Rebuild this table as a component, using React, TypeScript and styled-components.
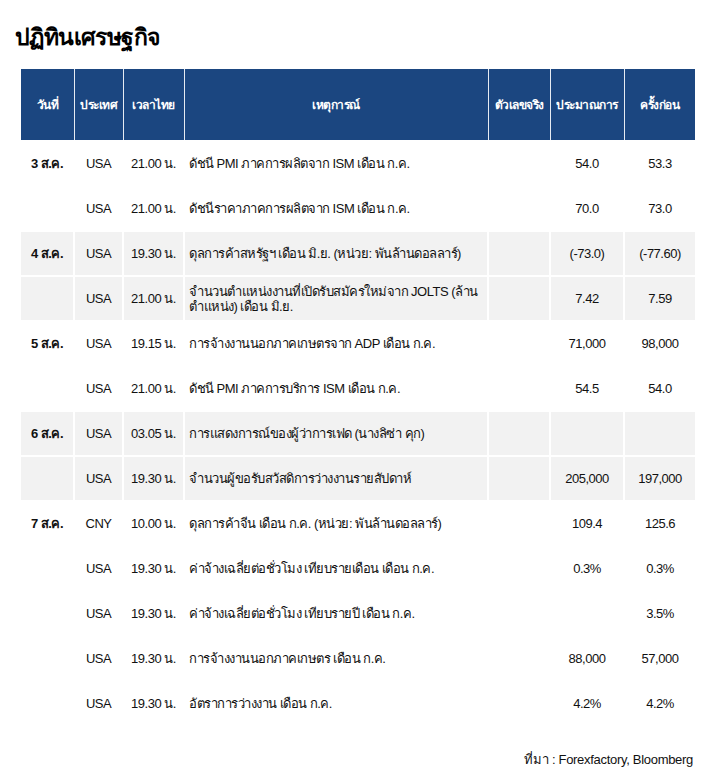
import { FC } from "react"
import styled, { createGlobalStyle } from "styled-components"

const GlobalStyle = createGlobalStyle`
  * {
    box-sizing: border-box;
  }
  body {
    margin: 0;
    background: #ffffff;
    font-family: "Liberation Sans", "Noto Sans", "DejaVu Sans", sans-serif;
    color: #111111;
  }
`

const Page = styled.div`
  width: 713px;
  padding: 21px 20px 0 14px;
`

const Title = styled.h1`
  margin: 0 0 16px 1px;
  font-size: 23px;
  font-weight: 700;
  line-height: 32px;
  letter-spacing: -0.6px;
  color: #000000;
`

const Table = styled.table`
  width: 674px;
  margin-left: 7px;
  border-collapse: collapse;
  font-size: 13px;
  letter-spacing: -0.5px;
`

const HeadCell = styled.th<{ $w: number }>`
  width: ${(p) => p.$w}px;
  height: 72px;
  background: #1b4680;
  color: #ffffff;
  font-size: 12px;
  font-weight: 700;
  text-align: center;
  border: 1.5px solid #e6ebf2;
  border-top: none;
  padding: 0 2px;
  &:first-child {
    border-left: none;
  }
  &:last-child {
    border-right: none;
  }
`

const Row = styled.tr<{ $shaded: boolean }>`
  background: ${(p) => (p.$shaded ? "#f2f2f2" : "#ffffff")};
`

const Cell = styled.td<{ $left?: boolean }>`
  height: 45px;
  padding: 2px 4px;
  text-align: ${(p) => (p.$left ? "left" : "center")};
  vertical-align: middle;
  line-height: 15px;
  border: 2px solid #ffffff;
  &:first-child {
    border-left: none;
  }
  &:last-child {
    border-right: none;
  }
`

const DateText = styled.span`
  font-weight: 700;
`

const Source = styled.div`
  margin-top: 22px;
  text-align: right;
  font-size: 13px;
  letter-spacing: -0.3px;
`

type Event = {
  date?: string
  country: string
  time: string
  title: string
  actual?: string
  forecast?: string
  previous?: string
}

type Day = { events: Event[]; shaded: boolean }

const days: Day[] = [
  {
    shaded: false,
    events: [
      { date: "3 ส.ค.", country: "USA", time: "21.00 น.", title: "ดัชนี PMI ภาคการผลิตจาก ISM เดือน ก.ค.", forecast: "54.0", previous: "53.3" },
      { country: "USA", time: "21.00 น.", title: "ดัชนีราคาภาคการผลิตจาก ISM เดือน ก.ค.", forecast: "70.0", previous: "73.0" },
    ],
  },
  {
    shaded: true,
    events: [
      { date: "4 ส.ค.", country: "USA", time: "19.30 น.", title: "ดุลการค้าสหรัฐฯ เดือน มิ.ย. (หน่วย: พันล้านดอลลาร์)", forecast: "(-73.0)", previous: "(-77.60)" },
      { country: "USA", time: "21.00 น.", title: "จำนวนตำแหน่งงานที่เปิดรับสมัครใหม่จาก JOLTS  (ล้านตำแหน่ง) เดือน มิ.ย.", forecast: "7.42", previous: "7.59" },
    ],
  },
  {
    shaded: false,
    events: [
      { date: "5 ส.ค.", country: "USA", time: "19.15 น.", title: "การจ้างงานนอกภาคเกษตรจาก ADP เดือน ก.ค.", forecast: "71,000", previous: "98,000" },
      { country: "USA", time: "21.00 น.", title: "ดัชนี PMI ภาคการบริการ ISM เดือน ก.ค.", forecast: "54.5", previous: "54.0" },
    ],
  },
  {
    shaded: true,
    events: [
      { date: "6 ส.ค.", country: "USA", time: "03.05 น.", title: "การแสดงการณ์ของผู้ว่าการเฟด (นางลิซ่า คุก)" },
      { country: "USA", time: "19.30 น.", title: "จำนวนผู้ขอรับสวัสดิการว่างงานรายสัปดาห์", forecast: "205,000", previous: "197,000" },
    ],
  },
  {
    shaded: false,
    events: [
      { date: "7 ส.ค.", country: "CNY", time: "10.00 น.", title: "ดุลการค้าจีน เดือน ก.ค. (หน่วย: พันล้านดอลลาร์)", forecast: "109.4", previous: "125.6" },
      { country: "USA", time: "19.30 น.", title: "ค่าจ้างเฉลี่ยต่อชั่วโมง เทียบรายเดือน เดือน ก.ค.", forecast: "0.3%", previous: "0.3%" },
      { country: "USA", time: "19.30 น.", title: "ค่าจ้างเฉลี่ยต่อชั่วโมง เทียบรายปี เดือน ก.ค.", previous: "3.5%" },
      { country: "USA", time: "19.30 น.", title: "การจ้างงานนอกภาคเกษตร เดือน ก.ค.", forecast: "88,000", previous: "57,000" },
      { country: "USA", time: "19.30 น.", title: "อัตราการว่างงาน เดือน ก.ค.", forecast: "4.2%", previous: "4.2%" },
    ],
  },
]

const columns = [
  { label: "วันที่", w: 53 },
  { label: "ประเทศ", w: 49 },
  { label: "เวลาไทย", w: 61 },
  { label: "เหตุการณ์", w: 304 },
  { label: "ตัวเลขจริง", w: 62 },
  { label: "ประมาณการ", w: 74 },
  { label: "ครั้งก่อน", w: 71 },
]

const App: FC = () => {
  return (
    <Page>
      <GlobalStyle />
      <Title>ปฏิทินเศรษฐกิจ</Title>
      <Table>
        <thead>
          <tr>
            {columns.map((c) => (
              <HeadCell key={c.label} $w={c.w}>
                {c.label}
              </HeadCell>
            ))}
          </tr>
        </thead>
        <tbody>
          {days.map((day) =>
            day.events.map((ev, i) => (
              <Row key={`${day.events[0].date}-${i}`} $shaded={day.shaded}>
                <Cell>{ev.date && <DateText>{ev.date}</DateText>}</Cell>
                <Cell>{ev.country}</Cell>
                <Cell>{ev.time}</Cell>
                <Cell $left>{ev.title}</Cell>
                <Cell>{ev.actual}</Cell>
                <Cell>{ev.forecast}</Cell>
                <Cell>{ev.previous}</Cell>
              </Row>
            ))
          )}
        </tbody>
      </Table>
      <Source>ที่มา : Forexfactory, Bloomberg</Source>
    </Page>
  )
}

export default App
